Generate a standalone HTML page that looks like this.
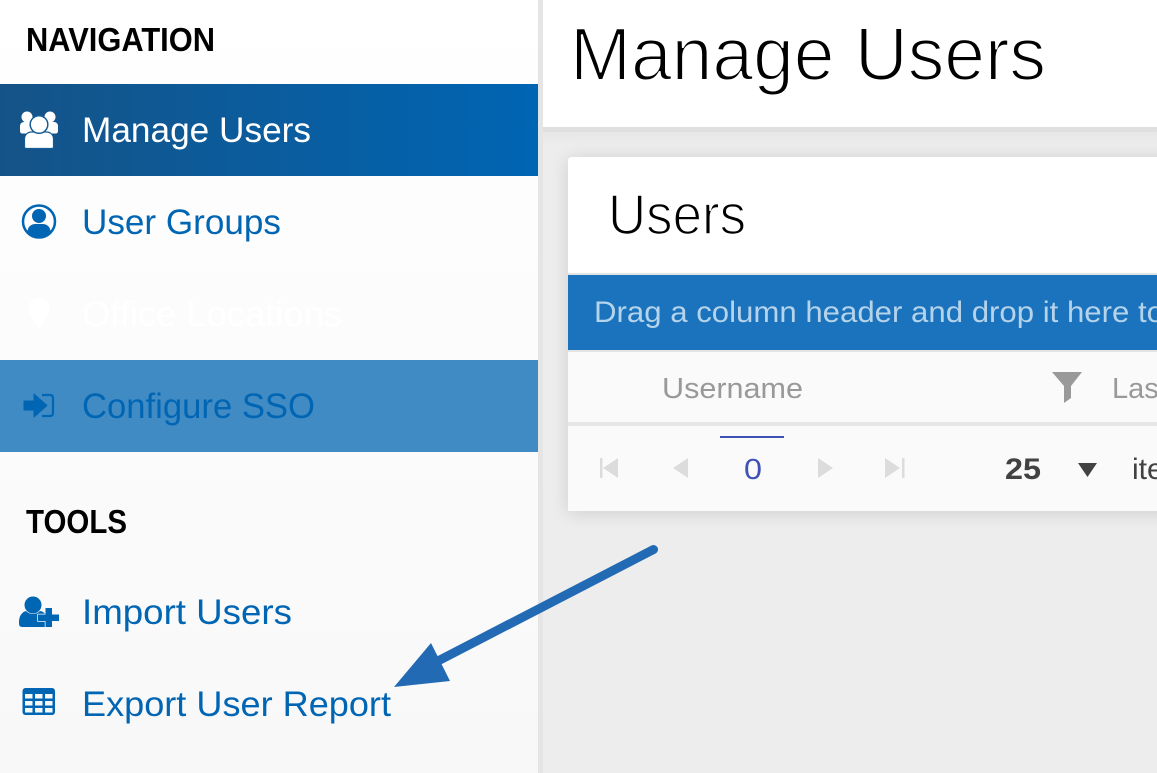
<!DOCTYPE html>
<html>
<head>
<meta charset="utf-8">
<title>Manage Users</title>
<style>
html,body{margin:0;padding:0;width:1157px;height:773px;overflow:hidden;background:#ededed}
svg{display:block}
text{font-family:"Liberation Sans",sans-serif}
</style>
</head>
<body>
<svg width="1157" height="773" viewBox="0 0 1157 773" xmlns="http://www.w3.org/2000/svg">
<defs>
<linearGradient id="side" x1="0" y1="0" x2="0" y2="1"><stop offset="0" stop-color="#ffffff"/><stop offset="1" stop-color="#f8f8f8"/></linearGradient>
<linearGradient id="act" x1="0" y1="0" x2="1" y2="0"><stop offset="0" stop-color="#155387"/><stop offset="1" stop-color="#0065b3"/></linearGradient>
<linearGradient id="hs" x1="0" y1="0" x2="0" y2="1"><stop offset="0" stop-color="#e7e7e7"/><stop offset="1" stop-color="#ededed"/></linearGradient>
<filter id="sh" x="-20%" y="-30%" width="140%" height="160%"><feGaussianBlur stdDeviation="9"/></filter>
</defs>

<!-- main -->
<rect x="543" y="0" width="614" height="773" fill="#ededed"/>
<rect x="543" y="132" width="614" height="14" fill="url(#hs)"/>
<rect x="0" y="0" width="1157" height="127" fill="#fff"/>
<rect x="543" y="127" width="614" height="5" fill="#e0e0e0"/>
<text x="570" y="80" font-size="75" fill="#000" stroke="#fff" stroke-width="2" textLength="476" lengthAdjust="spacingAndGlyphs">Manage Users</text>

<!-- card -->
<rect x="568" y="159" width="640" height="354" fill="#000" opacity=".13" filter="url(#sh)"/>
<path d="M1157 157H572q-4 0-4 4V511h589z" fill="#fff"/>
<text x="608" y="234" font-size="57" fill="#000" stroke="#fff" stroke-width="1.600" textLength="138" lengthAdjust="spacingAndGlyphs">Users</text>
<rect x="568" y="273" width="589" height="2" fill="#e3e3e3"/>
<rect x="568" y="275" width="589" height="75" fill="#1a73bc"/>
<text x="594" y="322" font-size="30" fill="#b5d3ea" textLength="570" lengthAdjust="spacingAndGlyphs">Drag a column header and drop it here to</text>
<rect x="568" y="350" width="589" height="2" fill="#e3e3e3"/>
<rect x="568" y="352" width="589" height="70" fill="#fafafa"/>
<text x="662" y="398" font-size="29" fill="#999" textLength="141" lengthAdjust="spacingAndGlyphs">Username</text>
<path d="M1052 372H1082L1071 386V398L1064 403V386Z" fill="#999"/>
<text x="1112" y="398" font-size="29" fill="#999">Las</text>
<rect x="568" y="422" width="589" height="4" fill="#e6e6e6"/>
<rect x="568" y="426" width="589" height="85" fill="#fafafa"/>

<!-- pager -->
<g fill="#dcdcdc">
<rect x="600" y="458" width="2.500" height="20"/><path d="M618 458v20l-15-10z"/>
<path d="M688 458v20l-15-10z"/>
<path d="M818 458v20l15-10z"/>
<path d="M885 458v20l15-10z"/><rect x="902" y="458" width="2.500" height="20"/>
</g>
<rect x="720" y="436" width="64" height="2" fill="#3f51b5"/>
<text x="744" y="479" font-size="29" fill="#3f51b5" textLength="18" lengthAdjust="spacingAndGlyphs">0</text>
<text x="1005" y="479" font-size="30" font-weight="700" fill="#424242" textLength="36" lengthAdjust="spacingAndGlyphs">25</text>
<path d="M1078 463h19l-9.500 14z" fill="#424242"/>
<text x="1132" y="479" font-size="30" fill="#424242">ite</text>

<!-- sidebar -->
<rect x="0" y="0" width="538" height="773" fill="url(#side)"/>
<rect x="538" y="0" width="5" height="773" fill="#e5e5e5"/>
<text x="26" y="51" font-size="33" font-weight="700" fill="#000" textLength="189" lengthAdjust="spacingAndGlyphs">NAVIGATION</text>

<rect x="0" y="84" width="538" height="92" fill="url(#act)"/>
<rect x="0" y="360" width="538" height="92" fill="#418bc5"/>

<!-- Manage Users icon -->
<g fill="#fff">
<circle cx="27" cy="117" r="5.500"/><circle cx="50" cy="117" r="5.500"/>
<path d="M20 131v-5c0-2.500 2-4 4-4h30c2 0 4 1.500 4 4v5c0 1.500-1 2.500-2 2.500H22c-1 0-2-1-2-2.500z"/>
<path d="M24.500 147v-8c0-4 3-7 7-7h15c4 0 7 3 7 7v8c0 1-.7 1.500-1.500 1.500H26c-.8 0-1.500-.5-1.500-1.500z" stroke="#155c96" stroke-width="1.200"/>
<circle cx="39" cy="124.500" r="8.800" stroke="#155c96" stroke-width="1.500"/>
</g>
<text x="82" y="142" font-size="35" fill="#fff" textLength="229" lengthAdjust="spacingAndGlyphs">Manage Users</text>

<!-- User Groups icon -->
<circle cx="39" cy="221.500" r="16" fill="none" stroke="#0065b3" stroke-width="2.500"/>
<circle cx="39" cy="216" r="7" fill="#0065b3"/>
<path d="M27.500 232c0-5 3.500-8 8-8h7c4.500 0 8 3 8 8-3 3-7 5-11.500 5s-8.500-2-11.500-5z" fill="#0065b3"/>
<text x="82" y="234" font-size="35" fill="#0065b3" textLength="199" lengthAdjust="spacingAndGlyphs">User Groups</text>

<!-- Office Locations (nearly invisible) -->
<path d="M39 298c-6 0-10.500 4.500-10.500 10.500 0 6 6 14 10.500 20 4.500-6 10.500-14 10.500-20C49.500 302.500 45 298 39 298z" fill="#fff"/>
<text x="82" y="326" font-size="35" fill="#fff" textLength="260" lengthAdjust="spacingAndGlyphs">Office Locations</text>

<!-- Configure SSO icon -->
<path d="M24 401h10v-7l13 11.500-13 11.500v-7H24z" fill="#0065b3" stroke="#0065b3" stroke-width="1" stroke-linejoin="round"/>
<path d="M42 395h8c2 0 3 1.200 3 3v15c0 1.800-1 3-3 3h-8" fill="none" stroke="#0065b3" stroke-width="2.200"/>
<text x="82" y="418" font-size="35" fill="#0065b3" textLength="233" lengthAdjust="spacingAndGlyphs">Configure SSO</text>

<text x="26" y="533" font-size="33" font-weight="700" fill="#000" textLength="101" lengthAdjust="spacingAndGlyphs">TOOLS</text>

<!-- Import Users icon -->
<circle cx="33" cy="605" r="8.500" fill="#0065b3"/>
<path d="M19 622c0-6 3-10 7-11 2 2 4.500 3 7 3s5-1 7-3c3 .5 5 2 6 4v12H22c-2 0-3-1.500-3-3.500z" fill="#0065b3"/>
<path d="M45.500 608h6.500v6.500h7v6.500h-7v6h-6.500v-6H38v-6.500h7.500z" fill="#0065b3" stroke="#f9f9f9" stroke-width="1.500" paint-order="stroke"/>
<text x="82" y="624" font-size="35" fill="#0065b3" textLength="210" lengthAdjust="spacingAndGlyphs">Import Users</text>

<!-- Export icon -->
<rect x="22.500" y="688" width="32.500" height="27" rx="3" fill="#0065b3"/>
<g fill="#f8f8f8">
<rect x="25" y="694" width="7.500" height="4.500"/><rect x="35" y="694" width="7.500" height="4.500"/><rect x="45" y="694" width="7.500" height="4.500"/>
<rect x="25" y="701" width="7.500" height="4.500"/><rect x="35" y="701" width="7.500" height="4.500"/><rect x="45" y="701" width="7.500" height="4.500"/>
<rect x="25" y="708" width="7.500" height="4.500"/><rect x="35" y="708" width="7.500" height="4.500"/><rect x="45" y="708" width="7.500" height="4.500"/>
</g>
<text x="82" y="716" font-size="35" fill="#0065b3" textLength="309" lengthAdjust="spacingAndGlyphs">Export User Report</text>

<!-- arrow -->
<path d="M653.500 549.500L436 662" stroke="#236ab5" stroke-width="9" stroke-linecap="round" fill="none"/>
<path d="M394 687L431 643 450 681z" fill="#236ab5"/>
</svg>
</body>
</html>
